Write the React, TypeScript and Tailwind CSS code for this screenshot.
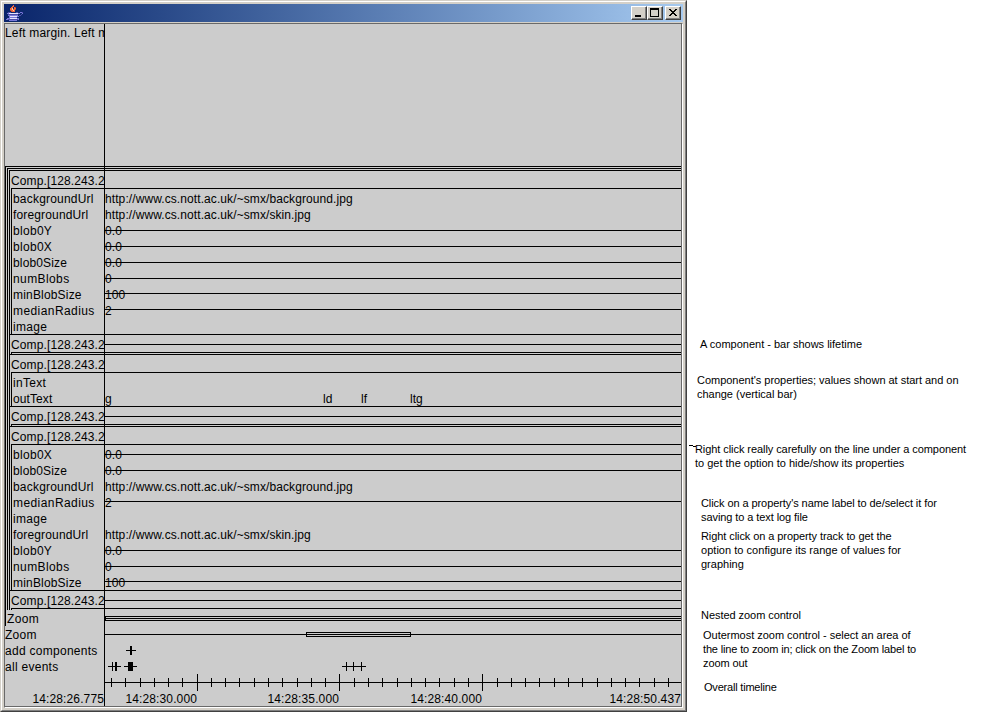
import type { ReactNode } from "react";

type Track = { name: string; value?: string; spacing?: string; line?: "mid" | "high" };

const backgroundUrl: Track = {
  name: "backgroundUrl",
  value: "http://www.cs.nott.ac.uk/~smx/background.jpg",
  spacing: "tracking-[0.2px]",
};
const foregroundUrl: Track = {
  name: "foregroundUrl",
  value: "http://www.cs.nott.ac.uk/~smx/skin.jpg",
  spacing: "tracking-[0.15px]",
};
const blob0Y: Track = { name: "blob0Y", value: "0.0", line: "mid" };
const blob0X: Track = { name: "blob0X", value: "0.0", line: "mid" };
const blob0Size: Track = { name: "blob0Size", value: "0.0", line: "mid", spacing: "tracking-[0.15px]" };
const numBlobs: Track = { name: "numBlobs", value: "0", line: "mid", spacing: "tracking-[0.4px]" };
const minBlobSize: Track = { name: "minBlobSize", value: "100", line: "high", spacing: "tracking-[0.18px]" };
const medianRadius: Track = { name: "medianRadius", value: "2", line: "high", spacing: "tracking-[0.42px]" };
const image: Track = { name: "image" };

const firstTracks = [
  backgroundUrl, foregroundUrl, blob0Y, blob0X, blob0Size, numBlobs, minBlobSize, medianRadius, image,
];
const lastTracks = [
  blob0X, blob0Size, backgroundUrl, medianRadius, image, foregroundUrl, blob0Y, numBlobs, minBlobSize,
];

const minorTicks = [
  111, 125, 140, 154, 168, 182, 211, 225, 239, 254, 268, 282, 297, 311, 325, 354, 368, 382, 397,
  411, 425, 439, 454, 468, 497, 511, 525, 539, 554, 568, 582, 597, 611, 625, 639, 654, 668,
];
const majorTicks = [197, 339, 482];

function TrackRow({
  name,
  value,
  spacing = "tracking-[0.3px]",
  line,
  children,
}: Track & { children?: ReactNode }) {
  return (
    <div className="flex h-4">
      <div className={`w-[91px] shrink-0 ${spacing}`}>{name}</div>
      <div className="relative flex-1 pl-px">
        <span className="tracking-[0.09px]">{value}</span>
        {children}
        {line && (
          <div
            className={
              line === "mid"
                ? "absolute inset-x-0 top-2 h-px bg-black"
                : "absolute inset-x-0 top-[7px] h-px bg-black"
            }
          />
        )}
      </div>
    </div>
  );
}

function Comp({ line, children }: { line?: boolean; children?: ReactNode }) {
  return (
    <div className="border-l border-t border-black pl-px pt-px">
      <div className="flex h-4">
        <div className="w-[94px] shrink-0 overflow-hidden whitespace-nowrap tracking-[0.12px]">
          Comp.[128.243.2
        </div>
        <div className="-ml-px flex-1 pt-2">{line && <div className="h-px bg-black" />}</div>
      </div>
      <div className="border-l border-t border-black pl-px pt-px">{children}</div>
    </div>
  );
}

function LaneRow({ label, children }: { label: string; children: ReactNode }) {
  return (
    <div className="flex h-4">
      <div className="w-[99px] shrink-0 tracking-[0.28px]">{label}</div>
      {children}
    </div>
  );
}

function JavaIcon() {
  return (
    <svg width="18" height="17" viewBox="0 0 18 17" shapeRendering="crispEdges" fill="none">
      <path stroke="#f0683c" d="M7 1.5h1M6 2.5h2M5 3.5h2M8 3.5h1M4 4.5h3M8 4.5h2M4 5.5h2M7 5.5h2M5 6.5h2M8 6.5h1M6 7.5h3" />
      <path stroke="#ffc8a0" d="M6 4.5h1M6 5.5h1M7 6.5h1" />
      <path stroke="#b8472e" d="M9 3.5h1M9 5.5h1M4 6.5h1M5 7.5h1" />
      <path stroke="#7878d8" d="M1 9.5h2M12 9.5h1M14 8.5h2M13 9.5h1M16 9.5h1M2 11.5h10M3 12.5h1M11 12.5h2M3 13.5h8M1 14.5h3M11 14.5h2M0 15.5h2M12 15.5h1M3 16.5h8" />
      <path stroke="#e4e4ff" d="M3 9.5h9M4 12.5h7M4 14.5h7" />
      <path stroke="#4c4ca8" d="M2 8.5h3M10 8.5h2M2 10.5h10M15 10.5h1M16 8.5h1M13 11.5h2M2 15.5h10" />
    </svg>
  );
}

function WindowButton({ children }: { children: ReactNode }) {
  return (
    <div className="h-[14px] w-4 border border-b-[#404040] border-l-white border-r-[#404040] border-t-white bg-[#d4d0c8]">
      <div className="h-3 w-[14px] border-b border-r border-[#808080]">
        <svg width="13" height="11" shapeRendering="crispEdges" className="block">
          {children}
        </svg>
      </div>
    </div>
  );
}

function TitleBar() {
  return (
    <div className="flex h-[18px] justify-between bg-linear-to-r from-[#0a246a] to-[#a6caf0] pl-[2px] pr-[2px]">
      <JavaIcon />
      <div className="flex pt-[2px]">
        <WindowButton>
          <rect x="3" y="8" width="6" height="2" />
        </WindowButton>
        <WindowButton>
          <path d="M2 1h9v9H2zM3 3v6h7V3z" fillRule="evenodd" />
        </WindowButton>
        <div className="w-[2px]" />
        <WindowButton>
          <path
            stroke="#000"
            d="M3 2.5h2M9 2.5h2M4 3.5h2M8 3.5h2M5 4.5h4M6 5.5h2M5 6.5h4M4 7.5h2M8 7.5h2M3 8.5h2M9 8.5h2"
          />
        </WindowButton>
      </div>
    </div>
  );
}

function Timeline() {
  return (
    <div className="flex-none">
      <svg width="676" height="16" viewBox="5 674 676 16" shapeRendering="crispEdges" className="block overflow-visible">
        <rect x="104" y="682" width="577" height="1" />
        {minorTicks.map((x) => (
          <rect key={x} x={x} y="678" width="1" height="9" />
        ))}
        {majorTicks.map((x) => (
          <rect key={x} x={x} y="674" width="1" height="17" />
        ))}
      </svg>
      <div className="flex h-4 tracking-[0.12px]">
        <div className="w-[99px] text-right">14:28:26.775</div>
        <div className="w-[93px] text-right">14:28:30.000</div>
        <div className="w-[142px] text-right">14:28:35.000</div>
        <div className="w-[143px] text-right">14:28:40.000</div>
        <div className="w-[199px] text-right">14:28:50.437</div>
      </div>
    </div>
  );
}

function Canvas() {
  return (
    <div className="relative flex h-[683px] flex-col overflow-hidden border-b border-r border-[#696969] bg-[#cccccc] text-[12px] leading-[18px]">
      <div className="h-[142px] w-[99px] shrink-0 overflow-hidden whitespace-nowrap tracking-[0.18px]">
        Left margin. Left m
      </div>
      <div className="border-l border-t border-black pl-px pt-px">
        <div className="border-l border-t border-black pl-px pt-px">
          <Comp>
            {firstTracks.map((t) => (
              <TrackRow key={t.name} {...t} />
            ))}
          </Comp>
          <Comp line />
          <Comp>
            <TrackRow name="inText" />
            <TrackRow name="outText" value="g" spacing="tracking-[0.1px]">
              <span className="absolute left-[219px] top-0">ld</span>
              <span className="absolute left-[257px] top-0">lf</span>
              <span className="absolute left-[306px] top-0">ltg</span>
            </TrackRow>
          </Comp>
          <Comp line />
          <Comp>
            {lastTracks.map((t) => (
              <TrackRow key={t.name} {...t} />
            ))}
          </Comp>
          <Comp line />
        </div>
        <div className="flex h-4">
          <div className="w-[98px] tracking-[0.35px]">Zoom</div>
          <div className="mt-[6px] h-[5px] flex-1 border-y border-l border-black pt-px">
            <div className="h-px bg-black" />
          </div>
        </div>
      </div>
      <LaneRow label="Zoom">
        <div className="flex flex-1 items-center pt-px">
          <div className="h-px w-[202px] bg-black" />
          <div className="h-[5px] w-[105px] border border-black pt-px">
            <div className="h-px bg-black" />
          </div>
          <div className="h-px flex-1 bg-black" />
        </div>
      </LaneRow>
      <LaneRow label="add components">
        <svg width="577" height="16" viewBox="104 642 577 16" shapeRendering="crispEdges">
          <path d="M126 650h10v1h-10zM130 646h2v9h-2z" />
        </svg>
      </LaneRow>
      <LaneRow label="all events">
        <svg width="577" height="16" viewBox="104 658 577 16" shapeRendering="crispEdges">
          <path d="M108 666h13v1h-13zM112 662h1v9h-1zM115 662h2v9h-2z" />
          <path d="M124 666h13v1h-13zM128 662h5v9h-5z" />
          <path d="M342 666h24v1h-24zM346 662h1v9h-1zM353 662h1v9h-1zM361 662h1v9h-1z" />
        </svg>
      </LaneRow>
      <Timeline />
      <div className="absolute inset-y-0 left-[99px] w-px bg-black" />
    </div>
  );
}

function Notes() {
  return (
    <div className="flex flex-1 flex-col whitespace-nowrap pt-[337px] text-[11px] leading-[14px]">
      <p className="ml-[13px] h-9">A component - bar shows lifetime</p>
      <p className="ml-[10px] h-[69px] tracking-[-0.02px]">
        Component's properties; values shown at start and on
        <br />
        change (vertical bar)
      </p>
      <div className="relative h-[54px] pl-2">
        <svg width="7" height="2" shapeRendering="crispEdges" className="absolute left-[2px] top-[3px]">
          <path d="M0 0h4v1H0zM4 1h3v1H4z" />
        </svg>
        <p className="tracking-[-0.07px]">
          Right click really carefully on the line under a component
          <br />
          <span className="tracking-[-0.01px]">to get the option to hide/show its properties</span>
        </p>
      </div>
      <p className="ml-[14px] h-[33px] tracking-[-0.08px]">
        Click on a property's name label to de/select it for
        <br />
        saving to a text log file
      </p>
      <p className="ml-[14px] h-[79px]">
        <span className="tracking-[-0.08px]">Right click on a property track to get the</span>
        <br />
        <span className="tracking-[0.03px]">option to configure its range of values for</span>
        <br />
        graphing
      </p>
      <p className="ml-[14px] h-5 tracking-[-0.05px]">Nested zoom control</p>
      <p className="ml-4 h-[52px]">
        <span className="tracking-[-0.02px]">Outermost zoom control - select an area of</span>
        <br />
        <span className="tracking-[-0.15px]">the line to zoom in; click on the Zoom label to</span>
        <br />
        <span className="tracking-[-0.1px]">zoom out</span>
      </p>
      <p className="ml-[17px] tracking-[-0.2px]">Overall timeline</p>
    </div>
  );
}

export default function App() {
  return (
    <div className="flex h-[712px] w-[1000px] overflow-hidden bg-white font-['Liberation_Sans',Arial,sans-serif] text-black">
      <div className="h-[712px] w-[687px] shrink-0 border border-b-[#404040] border-l-[#d4d0c8] border-r-[#404040] border-t-[#d4d0c8]">
        <div className="h-[710px] border border-b-[#808080] border-l-white border-r-[#808080] border-t-white bg-[#d4d0c8] p-[2px]">
          <TitleBar />
          <div className="mt-px border border-b-white border-l-[#696969] border-r-white border-t-[#696969]">
            <Canvas />
          </div>
        </div>
      </div>
      <Notes />
    </div>
  );
}
